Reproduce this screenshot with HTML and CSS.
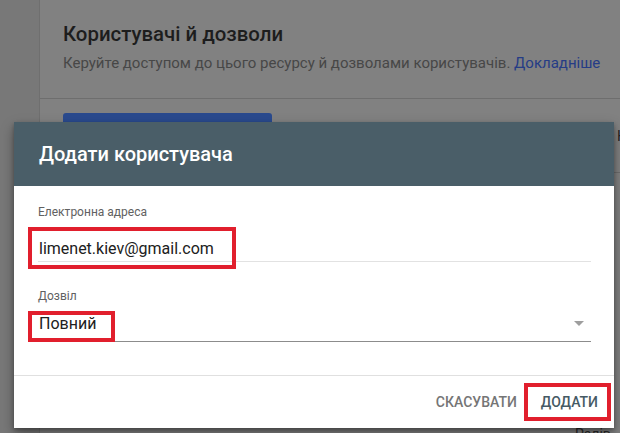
FILE: index.html
```html
<!DOCTYPE html>
<html lang="uk">
<head>
<meta charset="utf-8">
<title>Додати користувача</title>
<link rel="stylesheet" href="styles.css">
</head>
<body>
<div class="page">
  <div class="card">
    <div class="card-head">
      <h1 class="card-title">Користувачі й дозволи</h1>
      <p class="card-sub">Керуйте доступом до цього ресурсу й дозволами користувачів. <a class="link" href="#">Докладніше</a></p>
    </div>
    <div class="card-body">
      <div class="toolbar">
        <span class="primary-btn"></span>
        <span class="toolbar-label">Користувачі</span>
      </div>
      <div class="table-head"></div>
      <div class="table-foot"><span class="cell-right">Ралів</span></div>
    </div>
  </div>

  <div class="dialog">
    <div class="dialog-header">
      <h2 class="dialog-title">Додати користувача</h2>
    </div>
    <div class="dialog-body">
      <div class="field">
        <div class="field-label">Електронна адреса</div>
        <div class="field-input">limenet.kiev@gmail.com</div>
      </div>
      <div class="field field-select">
        <div class="field-label">Дозвіл</div>
        <div class="field-input select-input">
          <span>Повний</span>
          <span class="arrow"></span>
        </div>
      </div>
    </div>
    <div class="dialog-footer">
      <button class="btn btn-cancel">Скасувати</button>
      <button class="btn btn-add">Додати</button>
    </div>
    <span class="mark mark-email"></span>
    <span class="mark mark-perm"></span>
    <span class="mark mark-add"></span>
  </div>
</div>
</body>
</html>
```

FILE: styles.css
```css
* { box-sizing: border-box; }
html, body {
  margin: 0;
  padding: 0;
  width: 620px;
  height: 433px;
  overflow: hidden;
  background: #787878;
  font-family: Roboto, "Noto Sans", "Liberation Sans", sans-serif;
}
.page {
  position: relative;
  width: 620px;
  height: 433px;
  overflow: hidden;
}
.card {
  margin-left: 39px;
  width: 640px;
  height: 433px;
  background: #818181;
  border-left: 1px solid #6f6f6f;
}
.card-head {
  padding: 20px 0 25px 23px;
  border-bottom: 1px solid #6e6e6e;
}
.card-title {
  margin: 0;
  font-size: 20.4px;
  line-height: 28px;
  font-weight: 500;
  color: #1d1d1d;
}
.card-sub {
  margin: 5px 0 0;
  font-size: 15px;
  line-height: 20px;
  color: #474747;
  white-space: nowrap;
}
.link {
  color: #253c86;
  text-decoration: none;
}
.card-body {
  padding: 14px 0 0 23px;
}
.toolbar {
  display: flex;
  align-items: center;
  height: 36px;
  white-space: nowrap;
}
.primary-btn {
  flex: 0 0 209px;
  height: 36px;
  background: #2a4a8e;
  border-radius: 3px;
}
.toolbar-label {
  flex: 0 0 auto;
  margin-left: 345px;
  font-size: 14px;
  color: #222;
  padding-top: 10px;
}
.table-head {
  margin-top: 23px;
  border-top: 1px solid #6d6d6d;
}
.table-foot {
  display: flex;
  justify-content: flex-start;
  padding-top: 253px;
  padding-left: 512px;
}
.cell-right {
  font-size: 14px;
  color: #2a2a2a;
}

.dialog {
  position: absolute;
  left: 14px;
  top: 122px;
  width: 600px;
  height: 306px;
  background: #ffffff;
  box-shadow: 0 6px 12px rgba(0,0,0,0.35), 0 2px 4px rgba(0,0,0,0.25);
  display: flex;
  flex-direction: column;
}
.dialog-header {
  height: 64px;
  background: #4a5e68;
  display: flex;
  align-items: center;
  padding: 0 25px;
}
.dialog-title {
  margin: 0;
  font-size: 20px;
  font-weight: 500;
  color: #ffffff;
}
.dialog-body {
  padding: 18px 23px 33px 24px;
}
.field-label {
  font-size: 12px;
  line-height: 16px;
  color: #616161;
}
.field-input {
  padding: 19px 0 2px 1px;
  font-size: 16px;
  line-height: 20px;
  color: #202020;
  border-bottom: 1px solid #e2e2e2;
}
.field-select {
  margin-top: 26px;
}
.select-input {
  padding: 10px 0 7px 1px;
  border-bottom: 1px solid #8c8c8c;
  display: flex;
  justify-content: space-between;
  align-items: center;
}
.arrow {
  width: 0;
  height: 0;
  border-left: 5px solid transparent;
  border-right: 5px solid transparent;
  border-top: 5px solid #9e9e9e;
  margin-right: 7px;
  margin-top: -2px;
}
.dialog-footer {
  flex: 1;
  border-top: 1px solid #e0e0e0;
  display: flex;
  justify-content: flex-end;
  align-items: center;
  gap: 8px;
  padding: 0 8px 0 0;
}
.btn {
  border: 0;
  background: transparent;
  font-family: Roboto, "Noto Sans", "Liberation Sans", sans-serif;
  font-size: 14px;
  font-weight: 500;
  text-transform: uppercase;
  padding: 8px 8px;
  line-height: 20px;
}
.btn-cancel { color: #757575; }
.btn-add { color: #455a64; }

.mark {
  position: absolute;
  border: 4px solid #e11f2d;
}
.mark-email { left: 14px; top: 105px; width: 208px; height: 42px; }
.mark-perm { left: 14px; top: 189px; width: 87px; height: 31px; }
.mark-add { left: 510px; top: 261px; width: 87px; height: 38px; }
```
